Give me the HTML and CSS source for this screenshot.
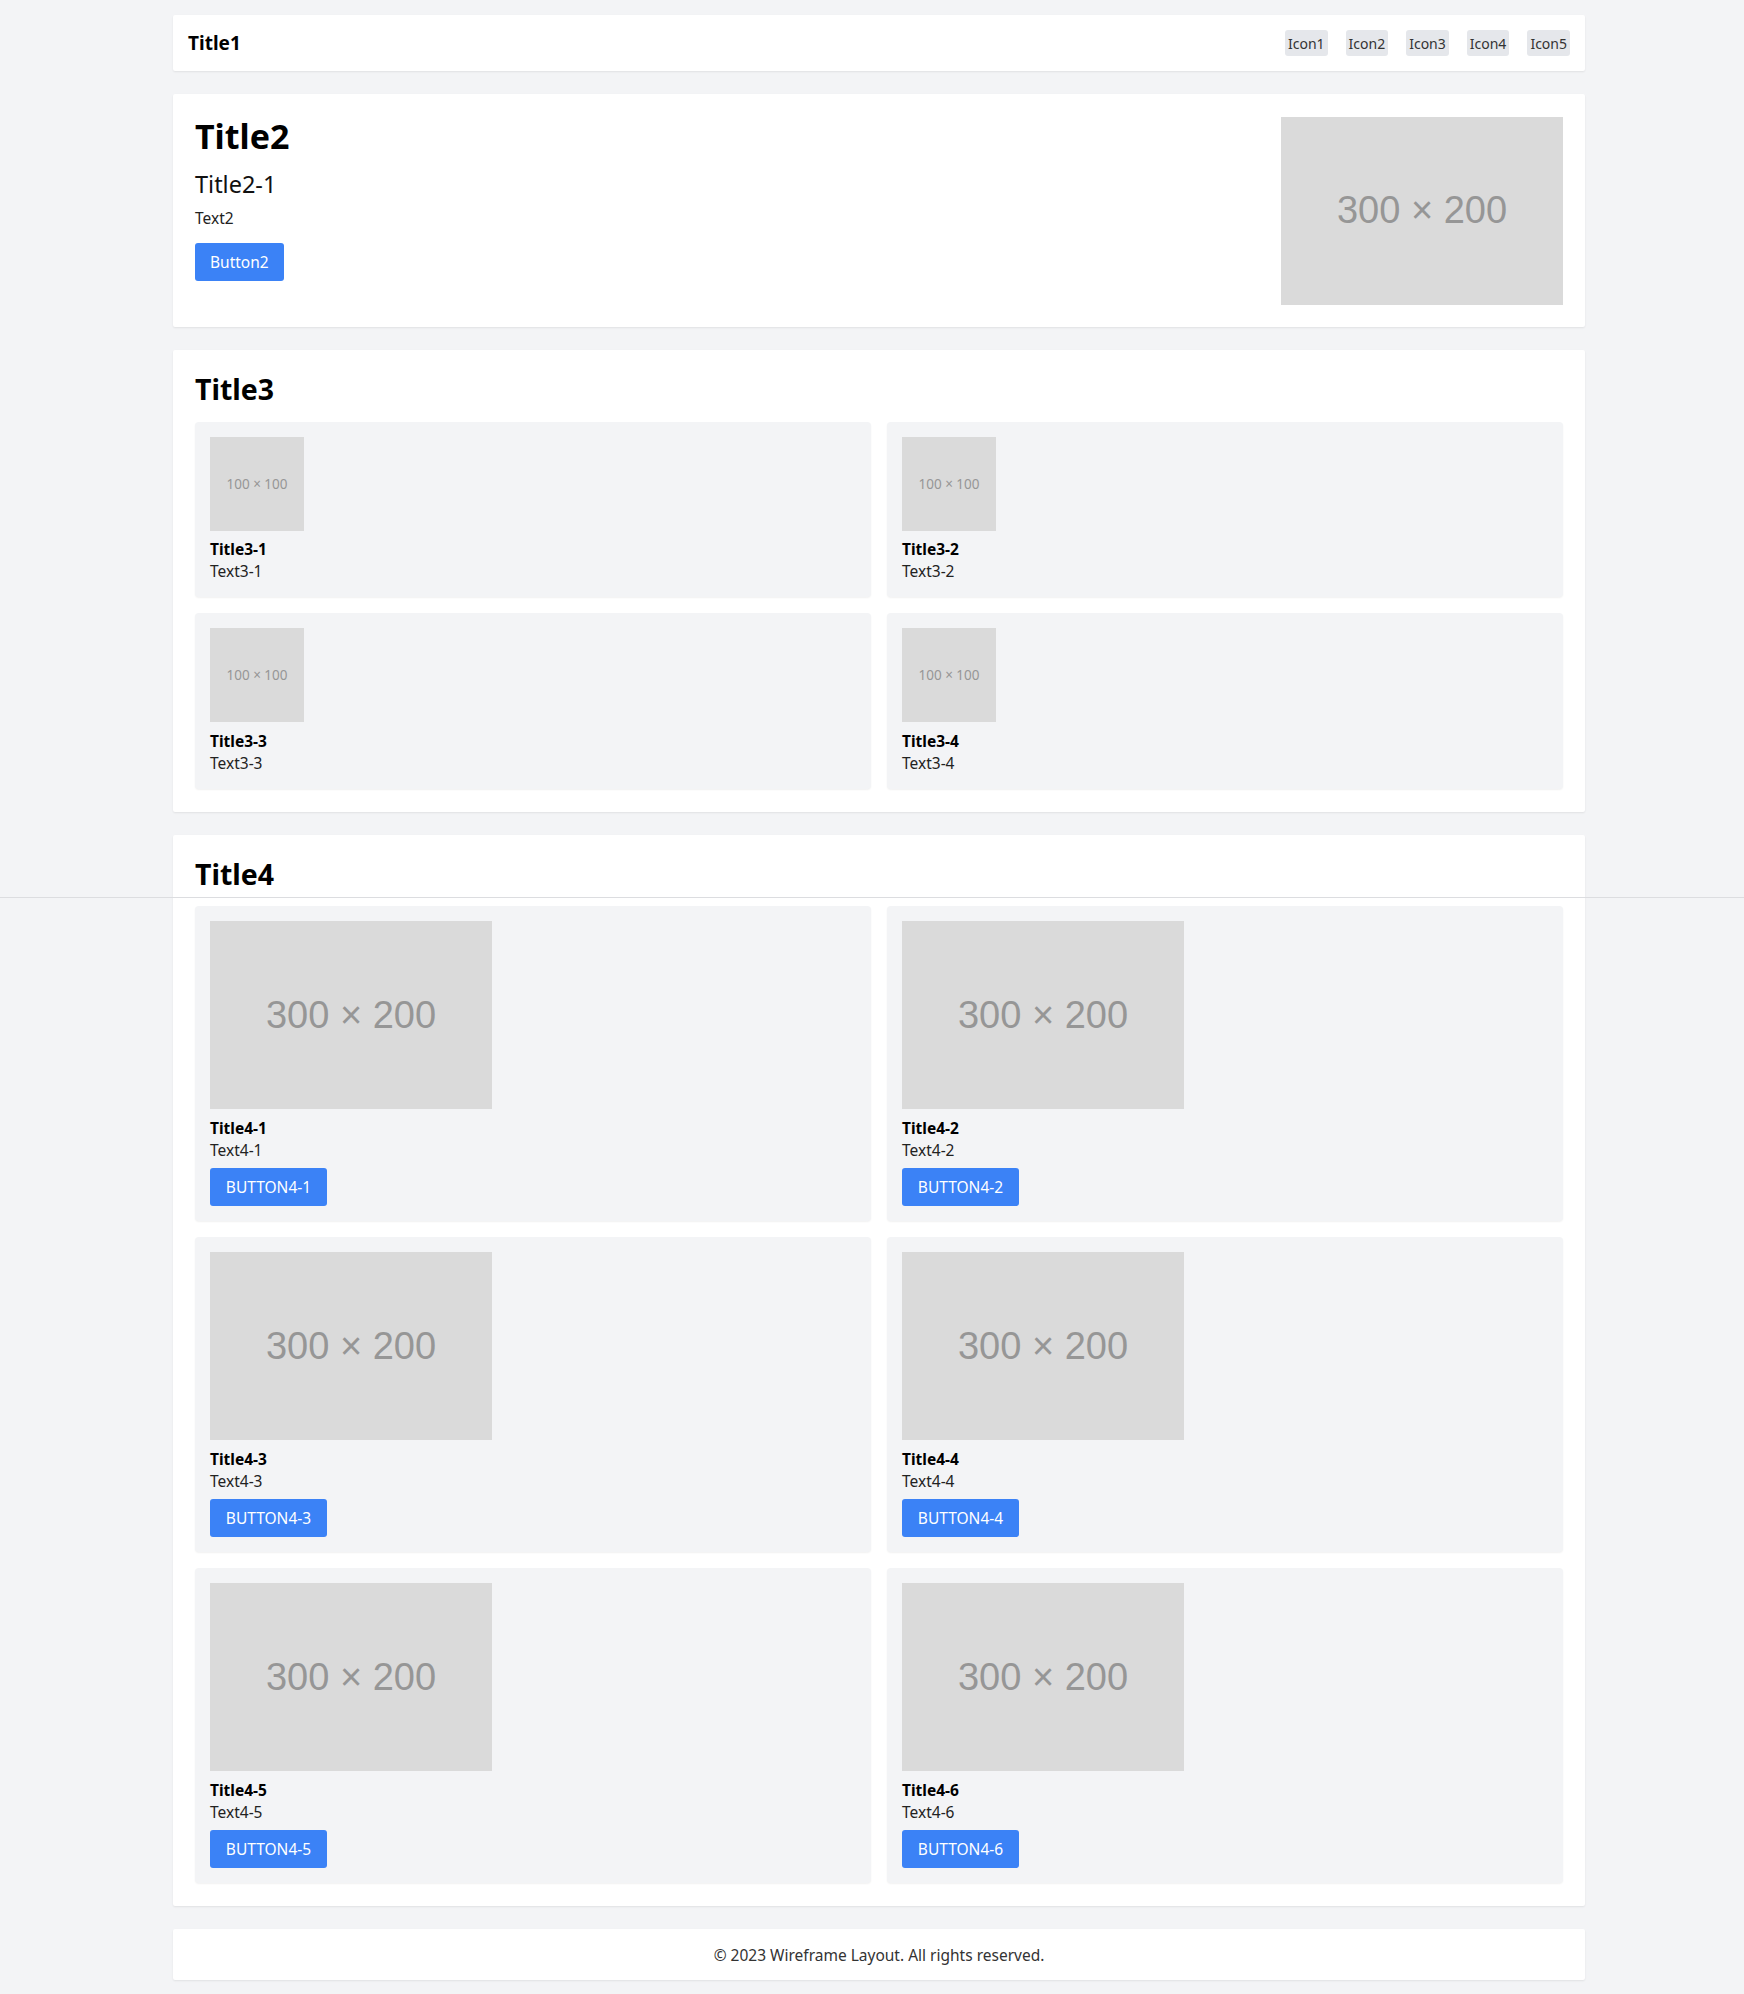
FILE: index.html
```html
<!DOCTYPE html>
<html lang="en">
<head>
<meta charset="utf-8">
<title>Wireframe Layout</title>
<link rel="stylesheet" href="styles.css">
</head>
<body>
<div class="seam"></div>
<div class="page">
  <header class="card topbar">
    <div class="brand">Title1</div>
    <nav class="icons">
      <span class="icon">Icon1</span>
      <span class="icon">Icon2</span>
      <span class="icon">Icon3</span>
      <span class="icon">Icon4</span>
      <span class="icon">Icon5</span>
    </nav>
  </header>

  <section class="card hero">
    <div class="hero-text">
      <h1 class="h1">Title2</h1>
      <h2 class="h2-sub">Title2-1</h2>
      <p class="hero-p">Text2</p>
      <button class="btn btn-hero">Button2</button>
    </div>
    <div class="ph ph-large">300 × 200</div>
  </section>

  <section class="card block">
    <h2 class="sec-title">Title3</h2>
    <div class="grid">
      <div class="item">
        <div class="ph ph-small">100 × 100</div>
        <div class="item-title">Title3-1</div>
        <div class="item-text">Text3-1</div>
      </div>
      <div class="item">
        <div class="ph ph-small">100 × 100</div>
        <div class="item-title">Title3-2</div>
        <div class="item-text">Text3-2</div>
      </div>
      <div class="item">
        <div class="ph ph-small">100 × 100</div>
        <div class="item-title">Title3-3</div>
        <div class="item-text">Text3-3</div>
      </div>
      <div class="item">
        <div class="ph ph-small">100 × 100</div>
        <div class="item-title">Title3-4</div>
        <div class="item-text">Text3-4</div>
      </div>
    </div>
  </section>

  <section class="card block">
    <h2 class="sec-title">Title4</h2>
    <div class="grid">
      <div class="item">
        <div class="ph ph-large">300 × 200</div>
        <div class="item-title">Title4-1</div>
        <div class="item-text">Text4-1</div>
        <button class="btn btn-item">Button4-1</button>
      </div>
      <div class="item">
        <div class="ph ph-large">300 × 200</div>
        <div class="item-title">Title4-2</div>
        <div class="item-text">Text4-2</div>
        <button class="btn btn-item">Button4-2</button>
      </div>
      <div class="item">
        <div class="ph ph-large">300 × 200</div>
        <div class="item-title">Title4-3</div>
        <div class="item-text">Text4-3</div>
        <button class="btn btn-item">Button4-3</button>
      </div>
      <div class="item">
        <div class="ph ph-large">300 × 200</div>
        <div class="item-title">Title4-4</div>
        <div class="item-text">Text4-4</div>
        <button class="btn btn-item">Button4-4</button>
      </div>
      <div class="item">
        <div class="ph ph-large">300 × 200</div>
        <div class="item-title">Title4-5</div>
        <div class="item-text">Text4-5</div>
        <button class="btn btn-item">Button4-5</button>
      </div>
      <div class="item">
        <div class="ph ph-large">300 × 200</div>
        <div class="item-title">Title4-6</div>
        <div class="item-text">Text4-6</div>
        <button class="btn btn-item">Button4-6</button>
      </div>
    </div>
  </section>

  <footer class="card footer">© 2023 Wireframe Layout. All rights reserved.</footer>
</div>
</body>
</html>
```

FILE: styles.css
```css
* { box-sizing: border-box; }

html, body {
  margin: 0;
  padding: 0;
  background: #f3f4f6;
}

body {
  font-family: "Noto Sans", "Open Sans", sans-serif;
  color: #111;
  position: relative;
}

.seam {
  position: absolute;
  left: 0;
  right: 0;
  top: 897px;
  height: 1px;
  background: #dcdde0;
  z-index: 5;
}

.page {
  width: 1412px;
  margin-left: 173px;
  padding-top: 15px;
  padding-bottom: 15px;
  display: flex;
  flex-direction: column;
  gap: 23px;
}

.card {
  background: #fff;
  box-shadow: 0 1px 2px rgba(0, 0, 0, 0.08);
  border-radius: 2px;
}

/* top bar */
.topbar {
  height: 56px;
  padding: 0 15px;
  display: flex;
  align-items: center;
  justify-content: space-between;
}

.brand {
  font-size: 19px;
  font-weight: 700;
  color: #000;
}

.icons {
  display: flex;
  gap: 18px;
}

.icon {
  display: inline-flex;
  align-items: center;
  justify-content: center;
  height: 26px;
  padding: 0 3px;
  min-width: 42px;
  background: #e5e7eb;
  border-radius: 3px;
  font-size: 14px;
  color: #333;
}

/* hero */
.hero {
  padding: 22.5px 22px;
  display: flex;
  justify-content: space-between;
  align-items: flex-start;
}

.h1 {
  margin: 0;
  font-size: 34px;
  line-height: 38px;
  font-weight: 700;
  color: #000;
}

.h2-sub {
  margin: 14px 0 0;
  font-size: 23.5px;
  line-height: 30px;
  font-weight: 400;
  color: #111;
}

.hero-p {
  margin: 8px 0 0;
  font-size: 15.5px;
  line-height: 22px;
  color: #222;
}

.btn {
  border: none;
  background: #3b82f6;
  color: #fff;
  font-family: "Noto Sans", "Open Sans", sans-serif;
  border-radius: 3px;
  cursor: pointer;
  display: block;
}

.btn-hero {
  margin-top: 14.5px;
  height: 37.5px;
  padding: 0 15px;
  font-size: 15.5px;
}

.btn-item {
  margin-top: 7.5px;
  height: 38px;
  padding: 0 15px;
  font-size: 15.5px;
  text-transform: uppercase;
  min-width: 117px;
}

/* placeholders */
.ph {
  background: #dadada;
  color: #969696;
  display: flex;
  align-items: center;
  justify-content: center;
  flex: none;
}

.ph-large {
  width: 282px;
  height: 188px;
  font-family: "Liberation Sans", Arial, sans-serif;
  font-size: 38px;
}

.ph-small {
  width: 94px;
  height: 94px;
  font-size: 13.5px;
}

/* sections */
.block {
  padding: 23px 22px;
}

.sec-title {
  margin: 0 0 15.5px;
  font-size: 28.5px;
  line-height: 33px;
  font-weight: 700;
  color: #000;
}

.grid {
  display: grid;
  grid-template-columns: 1fr 1fr;
  gap: 16px 16px;
}

.item {
  background: #f3f4f6;
  border-radius: 4px;
  box-shadow: 0 1px 2px rgba(0, 0, 0, 0.06);
  padding: 15px;
}

.item-title {
  margin-top: 7.5px;
  font-size: 15.5px;
  line-height: 22px;
  font-weight: 700;
  color: #000;
}

.item-text {
  font-size: 15.5px;
  line-height: 22px;
  color: #222;
}

/* footer */
.footer {
  height: 51px;
  display: flex;
  align-items: center;
  justify-content: center;
  font-size: 15.5px;
  color: #333;
}
```
